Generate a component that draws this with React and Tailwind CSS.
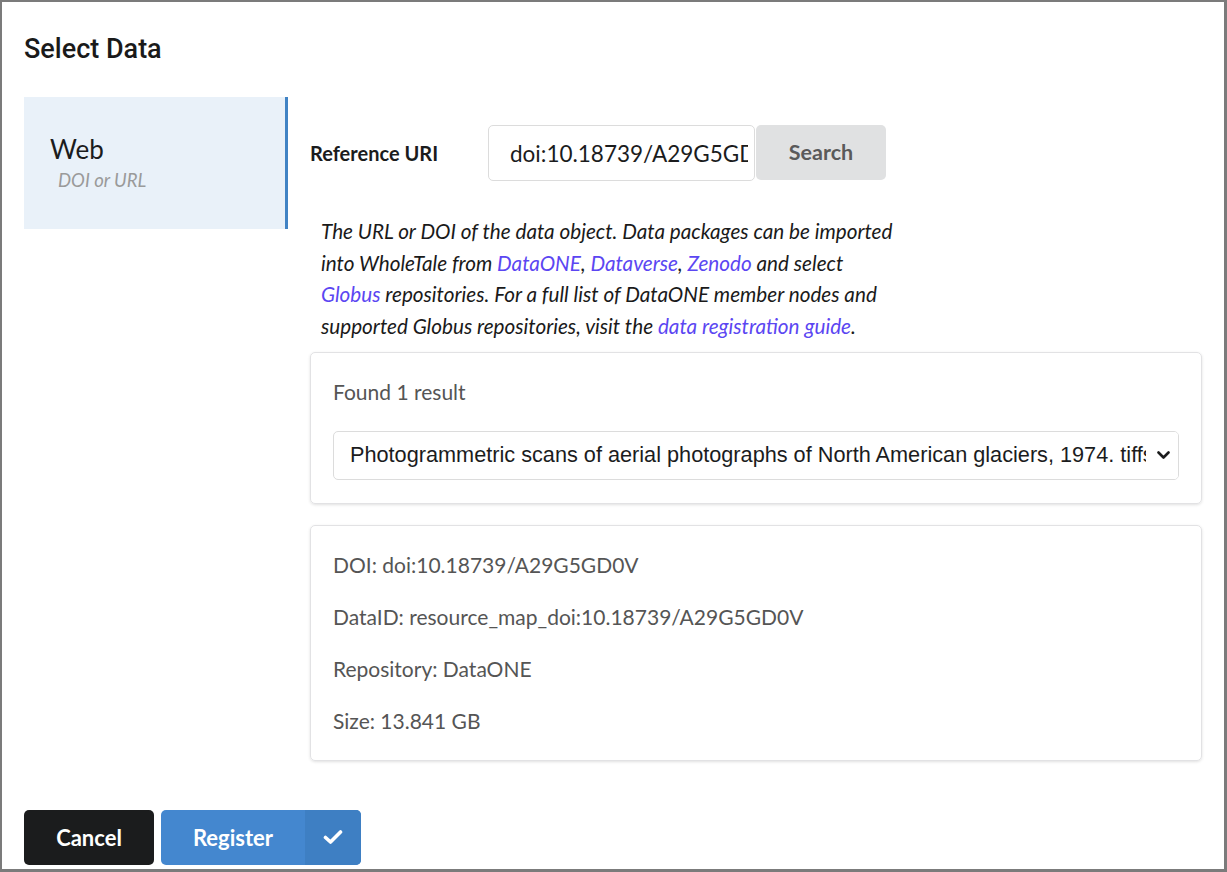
import React from 'react';

const lato = { fontFamily: 'Lato, "Open Sans", sans-serif' };

const Link = ({ children }) => (
  <a href="#" className="text-[#5b46f2]">{children}</a>
);

const App = () => {
  return (
    <div className="h-[872px] w-[1227px] overflow-hidden bg-white border-l-2 border-t-2 border-r-[3px] border-b-[3px] border-[#7b7b7b]" style={lato}>
      <div className="px-[22px] pt-[27px]">
        <h1 className="text-[27px] leading-[40px] text-[#1a1a1a] font-medium" style={{ fontFamily: 'Roboto, sans-serif' }}>Select Data</h1>

        <div className="mt-[28px] flex gap-[22px]">
          {/* left menu */}
          <div className="w-[264px] h-[132px] shrink-0 bg-[#e9f1f9] border-r-[3px] border-[#4183c4] pl-[26px] pt-[36px]">
            <div className="text-[26px] leading-[32px] text-[#1b1c1d]">Web</div>
            <div className="pl-[8px] mt-[3px] text-[18.5px] leading-[24px] italic text-[#9a9a9a]">DOI or URL</div>
          </div>

          {/* right column */}
          <div className="flex-1 pr-[22px]">
            <div className="mt-[28px] flex items-center">
              <label className="w-[178px] text-[20px] font-bold text-[#1b1c1d]">Reference URI</label>
              <input
                readOnly
                value="doi:10.18739/A29G5GD0V"
                className="w-[267px] h-[56px] rounded-[5px] border border-[#dcdcdc] pl-[21px] pr-[6px] text-[22.5px] text-[#1b1c1d] outline-none"
                style={lato}
              />
              <button className="ml-px w-[130px] h-[55px] -mt-[2px] rounded-[5px] bg-[#e0e1e2] text-[21.5px] font-bold text-[#5a5a5a]">Search</button>
            </div>

            <p className="mt-[35px] pl-[11px] w-[592px] text-[20.7px] leading-[31.7px] italic text-[#1a1a1a]">
              The URL or DOI of the data object. Data packages can be imported into WholeTale from <Link>DataONE</Link>, <Link>Dataverse</Link>, <Link>Zenodo</Link> and select <Link>Globus</Link> repositories. For a full list of DataONE member nodes and supported Globus repositories, visit the <Link>data registration guide</Link>.
            </p>

            <div className="mt-[9px] w-[892px] rounded-[5px] border border-[#e2e2e4] shadow-[0_1px_3px_rgba(0,0,0,0.12)] px-[22px] pt-[24px] pb-[23px]">
              <div className="text-[21px] leading-[30px] text-[#555]">Found 1 result</div>
              <div className="mt-[24px] relative h-[49px] rounded-[5px] border border-[#dcdcdc] flex items-center pl-[16px] pr-[40px] overflow-hidden">
                <span className="whitespace-nowrap text-[21.7px] text-[#1b1c1d]" style={{ fontFamily: '"Liberation Sans", Arial, sans-serif' }}>
                  Photogrammetric scans of aerial photographs of North American glaciers, 1974. tiffs
                </span>
                <div className="absolute right-0 top-0 h-full w-[32px] bg-white flex items-center justify-end pr-[8px]">
                  <svg width="13" height="9" viewBox="0 0 13 9" fill="none">
                    <path d="M1.5 1.5 L6.5 6.5 L11.5 1.5" stroke="#1b1c1d" strokeWidth="2.6" strokeLinecap="round" strokeLinejoin="round" />
                  </svg>
                </div>
              </div>
            </div>

            <div className="mt-[21px] w-[892px] rounded-[5px] border border-[#e2e2e4] shadow-[0_1px_3px_rgba(0,0,0,0.12)] px-[22px] pt-[23px] pb-[22px] flex flex-col gap-[20px] text-[21px] leading-[32.2px] text-[#555]">
              <div>DOI: doi:10.18739/A29G5GD0V</div>
              <div>DataID: resource_map_doi:10.18739/A29G5GD0V</div>
              <div>Repository: DataONE</div>
              <div>Size: 13.841 GB</div>
            </div>
          </div>
        </div>

        <div className="mt-[49px] flex gap-[7px]">
          <button className="w-[130px] h-[55px] rounded-[5px] bg-[#1b1c1d] text-white text-[22px] font-bold">Cancel</button>
          <button className="w-[200px] h-[55px] rounded-[5px] bg-[#4487cf] text-white text-[22px] font-bold flex overflow-hidden">
            <span className="w-[144px] h-full flex items-center justify-center">Register</span>
            <span className="w-[56px] h-full flex items-center justify-center bg-[#3e7fc3]">
              <svg width="20" height="16" viewBox="0 0 20 16" fill="none">
                <path d="M2.5 8.5 L7.5 13 L17.5 3" stroke="white" strokeWidth="3.6" strokeLinecap="round" strokeLinejoin="round" />
              </svg>
            </span>
          </button>
        </div>
      </div>
    </div>
  );
};

export default App;
